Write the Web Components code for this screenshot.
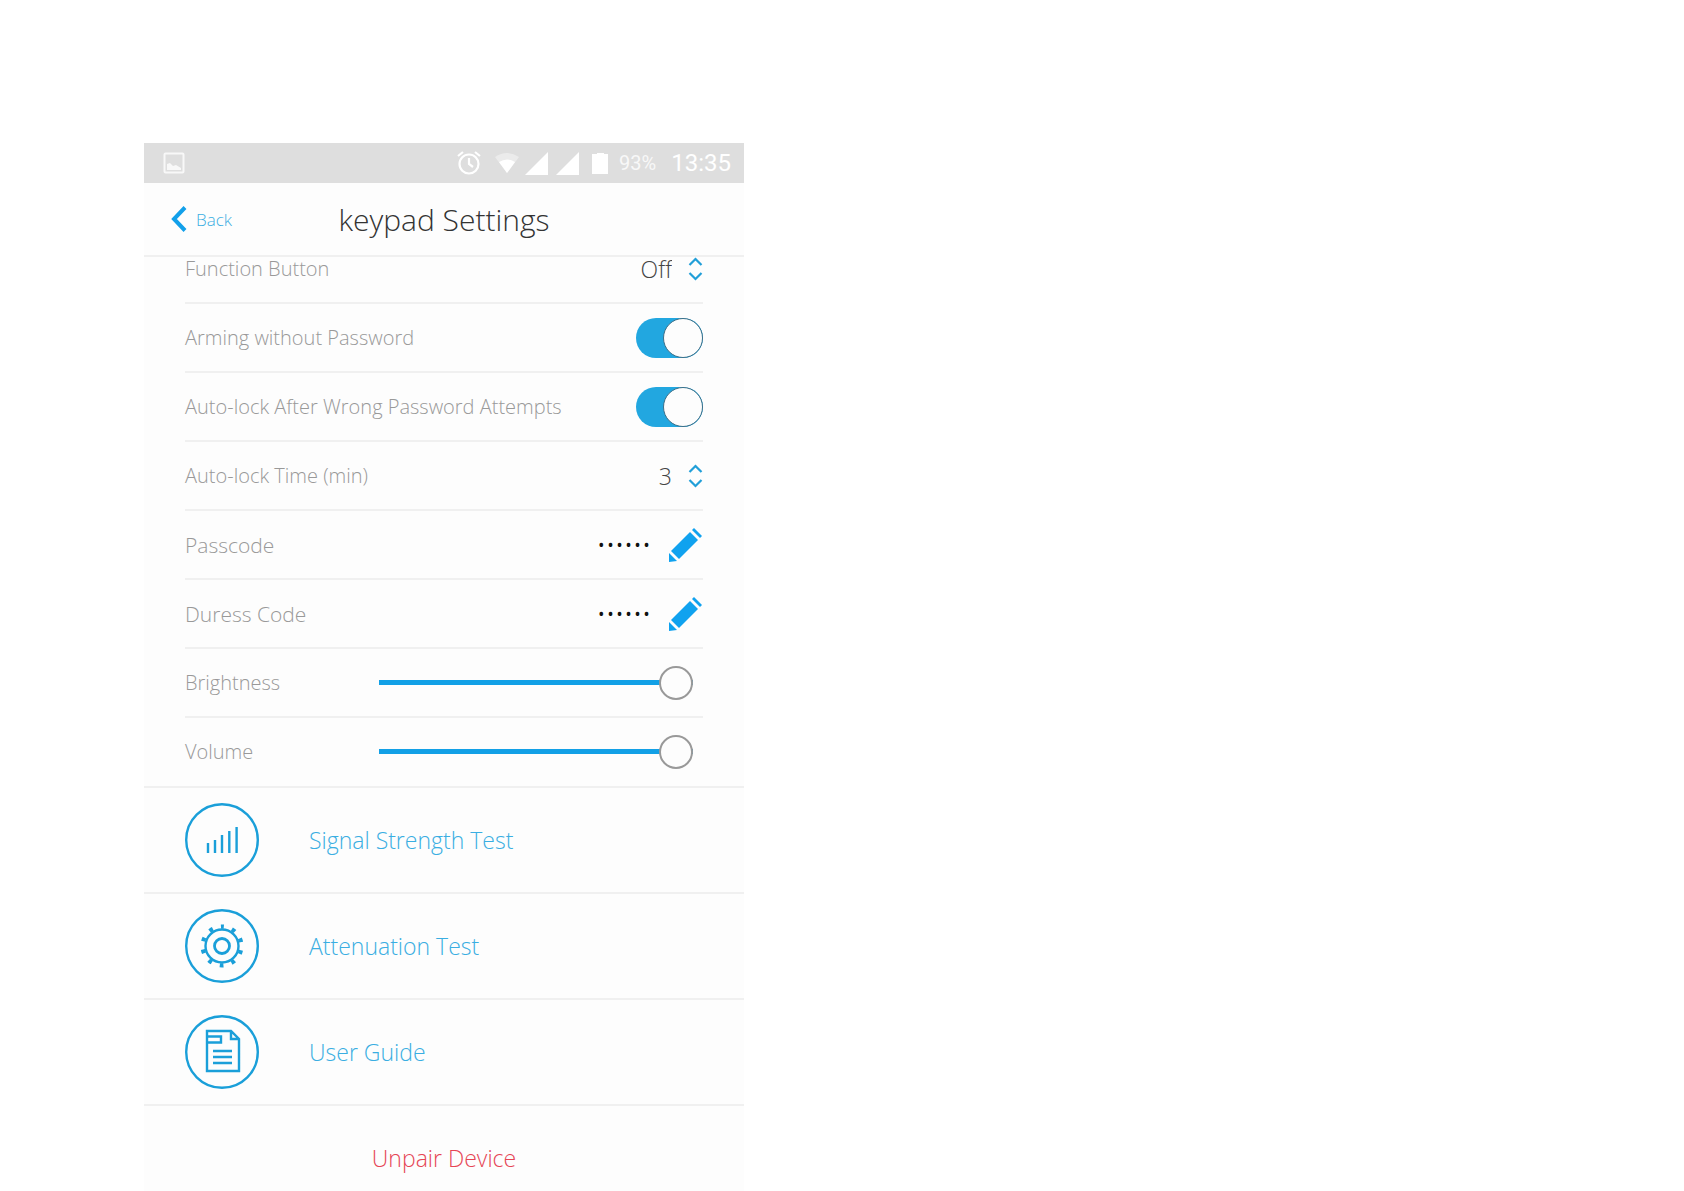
<!DOCTYPE html>
<html lang="en">
<head>
<meta charset="utf-8">
<meta name="viewport" content="width=device-width, initial-scale=1">
<title>keypad Settings</title>
<style>
    body {
        margin: 0;
        background: #fff;
        font-family: "Open Sans", "Noto Sans", sans-serif;
        font-weight: 300;
        --blue: #12a0ea;
        --blue-text: #3aaee2;
        --line: #f0f0f0;
    }
</style>
</head>
<body>
<keypad-screen>
    <status-bar slot="status" battery="93%" time="13:35"></status-bar>
    <screen-header slot="header" back="Back">keypad Settings</screen-header>

    <select-row label="Function Button" options="Off,Panic,Silence"></select-row>
    <switch-row label="Arming without Password"></switch-row>
    <switch-row label="Auto-lock After Wrong Password Attempts"></switch-row>
    <select-row label="Auto-lock Time (min)" options="3,5,10,20"></select-row>
    <code-row label="Passcode"></code-row>
    <code-row label="Duress Code"></code-row>
    <slider-row label="Brightness"></slider-row>
    <slider-row label="Volume"></slider-row>

    <action-row slot="actions">
        <svg slot="icon" viewBox="0 0 74 74" width="74" height="74" fill="none" stroke="currentColor" stroke-width="2.4" aria-hidden="true">
            <circle cx="37" cy="37" r="35.8"/>
            <path d="M23 50V40M30 50V37M37 50V32M44.3 50V28M51.6 50V24"/>
        </svg>
        Signal Strength Test
    </action-row>
    <action-row slot="actions">
        <svg slot="icon" viewBox="0 0 74 74" width="74" height="74" fill="none" stroke="currentColor" stroke-width="2.4" aria-hidden="true">
            <circle cx="37" cy="37" r="35.8"/>
            <circle cx="37" cy="37" r="16.5"/>
            <circle cx="37" cy="37" r="7.5" stroke-width="2.8"/>
            <circle cx="37" cy="37" r="19.4" stroke-width="4.2" stroke-dasharray="3.8 8.39" stroke-dashoffset="1.9" transform="rotate(-90 37 37)"/>
        </svg>
        Attenuation Test
    </action-row>
    <action-row slot="actions">
        <svg slot="icon" viewBox="0 0 74 74" width="74" height="74" fill="none" stroke="currentColor" stroke-width="2.4" aria-hidden="true">
            <circle cx="37" cy="37" r="35.8"/>
            <path d="M22 16H46L54 24V56H22ZM46 16V24H54M22 21.5H36V27.5H22M28 36H47M28 42H47M28 48H47"/>
        </svg>
        User Guide
    </action-row>
    <unpair-row slot="actions">Unpair Device</unpair-row>
</keypad-screen>

<script>
class KeypadScreen extends HTMLElement {
    connectedCallback() {
        this.attachShadow({mode: 'open'}).innerHTML = `
        <style>
            :host {
                display: flex;
                flex-direction: column;
                box-sizing: border-box;
                height: 100vh;
                padding: 143px 0 0 144px;
                overflow: hidden;
            }

            .phone {
                display: flex;
                flex-direction: column;
                flex: 1;
                min-height: 0;
                width: 100%;
                max-width: 600px;
                background: #fdfdfd;
            }

            .content {
                flex: 1;
                min-height: 0;
                overflow: hidden;
            }

            /* the list is scrolled a little way under the header */
            .rows {
                margin: -24px 41px 0;
                padding-bottom: 1px;
            }
        </style>

        <div class="phone">
            <slot name="status"></slot>
            <slot name="header"></slot>
            <main class="content">
                <div class="rows"><slot></slot></div>
                <slot name="actions"></slot>
            </main>
        </div>
        `
    }
}

class StatusBar extends HTMLElement {
    connectedCallback() {
        this.attachShadow({mode: 'open'}).innerHTML = `
        <style>
            :host {
                display: flex;
                align-items: center;
                height: 40px;
                padding: 0 13px 0 19px;
                background: #dedede;
                color: #fff;
                font-family: Roboto, sans-serif;
                font-weight: 400;
            }

            .icons {
                display: flex;
                align-items: center;
                gap: 8px;
                margin-left: auto;
            }

            .wifi {
                margin: 0 -3px 0 5px;
            }

            .battery {
                font-size: 20px;
                margin: 0 15px 0 6px;
                opacity: .8;
            }

            .time {
                font-size: 24px;
            }
        </style>

        <svg width="22" height="22" viewBox="0 0 22 22" opacity=".8" aria-hidden="true">
            <rect x="1.5" y="1.5" width="19" height="19" rx="1" fill="none" stroke="#fff" stroke-width="2"/>
            <path d="M4 18V12L7 11L10 14L13 13L18 16V18Z" fill="#fff"/>
        </svg>
        <div class="icons">
            <svg width="24" height="26" viewBox="0 0 24 26" fill="none" stroke="#fff" stroke-width="2.2" aria-hidden="true">
                <circle cx="12" cy="14" r="9.5"/>
                <path d="M12 8V14L16 17M1 6L6 2M23 6L18 2"/>
            </svg>
            <svg class="wifi" width="26" height="22" viewBox="0 0 26 22" fill="#fff" aria-hidden="true">
                <path d="M13 21L1 5Q13 -3 25 5Z" opacity=".4"/>
                <path d="M13 21L5 10Q13 5 21 10Z"/>
            </svg>
            <svg width="23" height="23" viewBox="0 0 23 23" aria-hidden="true"><path d="M23 0V23H0Z" fill="#fff"/></svg>
            <svg width="23" height="23" viewBox="0 0 23 23" aria-hidden="true"><path d="M23 0V23H0Z" fill="#fff"/></svg>
            <svg width="26" height="23" viewBox="0 0 26 23" aria-hidden="true"><path d="M5 2H10V1H17V2H21V22H5Z" fill="#fff"/></svg>
        </div>
        <span class="battery">${this.getAttribute('battery')}</span>
        <span class="time">${this.getAttribute('time')}</span>
        `
    }
}

class ScreenHeader extends HTMLElement {
    connectedCallback() {
        this.attachShadow({mode: 'open'}).innerHTML = `
        <style>
            :host {
                display: grid;
                grid-template-columns: 1fr auto 1fr;
                align-items: center;
                position: relative;
                height: 72px;
                padding: 0 27px;
                background: #fdfdfd;
                border-bottom: 2px solid var(--line);
            }

            button {
                display: flex;
                align-items: center;
                gap: 9px;
                justify-self: start;
                padding: 0;
                border: 0;
                background: none;
                color: var(--blue-text);
                font: inherit;
                font-size: 17px;
                cursor: pointer;
            }

            svg {
                color: var(--blue);
            }

            h1 {
                margin: 0;
                color: #333;
                font-size: 30px;
                font-weight: 300;
            }
        </style>

        <button type="button">
            <svg width="16" height="26" viewBox="0 0 16 26" fill="none" stroke="currentColor" stroke-width="4" aria-hidden="true">
                <path d="M14 1.5L3 13L14 24.5"/>
            </svg>
            ${this.getAttribute('back')}
        </button>
        <h1><slot></slot></h1>
        `
    }
}

// common box and label, the control comes from the subclass
class SettingRow extends HTMLElement {
    connectedCallback() {
        this.attachShadow({mode: 'open'}).innerHTML = `
        <style>
            :host {
                display: flex;
                align-items: center;
                justify-content: space-between;
                box-sizing: border-box;
                height: 69px;
                border-top: 2px solid var(--line);
            }

            label {
                color: #999;
                font-size: 20px;
                white-space: nowrap;
            }
        </style>
        <label for="control">${this.getAttribute('label')}</label>
        ${this.control()}
        `
    }
}

class SelectRow extends SettingRow {
    control() {
        let options = this.getAttribute('options').split(',')
        return `
        <style>
            .field {
                display: grid;
                align-items: center;
            }

            select, svg {
                grid-area: 1 / 1;
            }

            select {
                appearance: none;
                width: 100px;
                padding: 0 31px 0 0;
                border: 0;
                background: none;
                color: #444;
                font: inherit;
                font-size: 23px;
                text-align: right;
                text-align-last: right;
            }

            svg {
                justify-self: end;
                pointer-events: none;
            }
        </style>
        <div class="field">
            <select id="control">${options.map(o => `<option>${o}</option>`).join('')}</select>
            <svg width="15" height="24" viewBox="0 0 15 24" fill="none" stroke="#219fd8" stroke-width="2.2" aria-hidden="true">
                <path d="M1.5 8L7.5 2L13.5 8M1.5 16L7.5 22L13.5 16"/>
            </svg>
        </div>
        `
    }
}

class SwitchRow extends SettingRow {
    control() {
        return `
        <style>
            input {
                appearance: none;
                display: flex;
                width: 67px;
                height: 40px;
                margin: 0;
                border-radius: 20px;
                background: #ccc;
                cursor: pointer;
            }

            input::before {
                content: "";
                box-sizing: border-box;
                width: 40px;
                height: 40px;
                border: 1px solid #3c6f88;
                border-radius: 50%;
                background: #fdfdfd;
            }

            input:checked {
                justify-content: flex-end;
                background: #22a7e0;
            }
        </style>
        <input id="control" type="checkbox" role="switch" checked>
        `
    }
}

class CodeRow extends SettingRow {
    control() {
        return `
        <style>
            label {
                font-size: 21px;
            }

            .code {
                display: flex;
                align-items: center;
                gap: 17px;
            }

            .dots {
                color: #111;
                font-size: 24px;
            }

            button {
                display: block;
                padding: 0;
                border: 0;
                background: none;
                cursor: pointer;
            }

            svg {
                display: block;
            }
        </style>
        <div class="code">
            <span class="dots">••••••</span>
            <button id="control" type="button">
                <svg width="35" height="36" viewBox="0 0 35 36" fill="#10a2ef" aria-hidden="true">
                    <path d="M3 24L22 5L30 13L11 32ZM24 3L26 1L34 9L32 11ZM1 26L9 34L1 35Z"/>
                </svg>
            </button>
        </div>
        `
    }
}

class SliderRow extends SettingRow {
    control() {
        return `
        <style>
            label {
                flex: 0 0 194px;
            }

            input {
                appearance: none;
                flex: 1;
                min-width: 0;
                height: 34px;
                margin: 0 10px 0 0;
                background: linear-gradient(#12a0e6, #12a0e6) center / 100% 5px no-repeat;
            }

            input::-webkit-slider-thumb {
                appearance: none;
                box-sizing: border-box;
                width: 34px;
                height: 34px;
                border: 2px solid #999;
                border-radius: 50%;
                background: #fdfdfd;
            }
        </style>
        <input id="control" type="range" min="0" max="100" value="100">
        `
    }
}

class ActionRow extends HTMLElement {
    connectedCallback() {
        this.attachShadow({mode: 'open'}).innerHTML = `
        <style>
            :host {
                display: block;
                color: #1a9fd9;
                border-top: 2px solid var(--line);
            }

            button {
                display: flex;
                align-items: center;
                gap: 50px;
                width: 100%;
                height: 104px;
                padding: 0 41px;
                border: 0;
                background: none;
                color: inherit;
                font: inherit;
                font-size: 23px;
                cursor: pointer;
            }

            span {
                color: var(--blue-text);
            }
        </style>

        <button type="button">
            <slot name="icon"></slot>
            <span><slot></slot></span>
        </button>
        `
    }
}

class UnpairRow extends HTMLElement {
    connectedCallback() {
        this.attachShadow({mode: 'open'}).innerHTML = `
        <style>
            :host {
                display: block;
                border-top: 2px solid var(--line);
            }

            button {
                width: 100%;
                height: 104px;
                padding: 0;
                border: 0;
                background: none;
                color: #e64555;
                font: inherit;
                font-size: 23px;
                cursor: pointer;
            }
        </style>

        <button type="button"><slot></slot></button>
        `
    }
}

window.customElements.define('keypad-screen', KeypadScreen);
window.customElements.define('status-bar', StatusBar);
window.customElements.define('screen-header', ScreenHeader);
window.customElements.define('select-row', SelectRow);
window.customElements.define('switch-row', SwitchRow);
window.customElements.define('code-row', CodeRow);
window.customElements.define('slider-row', SliderRow);
window.customElements.define('action-row', ActionRow);
window.customElements.define('unpair-row', UnpairRow);
</script>
</body>
</html>
